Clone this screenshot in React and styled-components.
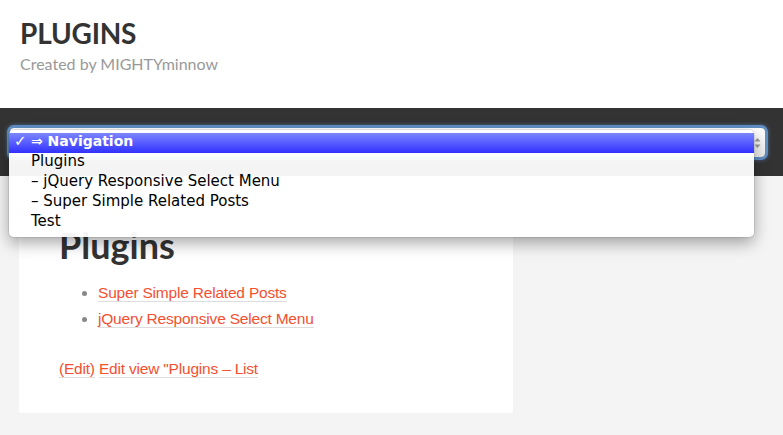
import React from "react";
import styled, { createGlobalStyle } from "styled-components";

const GlobalStyle = createGlobalStyle`
  body {
    margin: 0;
    background: #f4f4f4;
    font-family: "Liberation Sans", Arial, sans-serif;
  }
`;

const Page = styled.div`
  width: 783px;
  min-height: 435px;
  background: #f4f4f4;
`;

const Header = styled.header`
  height: 108px;
  box-sizing: border-box;
  padding: 19px 20px 0;
  background: #fff;
`;

const SiteTitle = styled.h1`
  margin: 0;
  font-family: Lato, sans-serif;
  font-weight: 700;
  font-size: 28px;
  line-height: 28px;
  color: #333;
  letter-spacing: -0.2px;
`;

const Tagline = styled.p`
  margin: 7px 0 0;
  font-family: Lato, sans-serif;
  font-size: 16px;
  line-height: 20px;
  color: #999;
`;

const Nav = styled.nav`
  position: relative;
  background: #333;
  padding: 20px 18px 19px 10px;
`;

const SelectBox = styled.div`
  height: 29px;
  box-sizing: border-box;
  border-radius: 4px;
  background: linear-gradient(#fff, #ececec);
  box-shadow: 0 0 0 3px #5f8fc4, 0 0 4px 3px rgba(95, 143, 196, 0.6);
  display: flex;
  justify-content: flex-end;
  align-items: center;
  padding-right: 4px;
`;

const Menu = styled.ul`
  position: absolute;
  top: 22px;
  left: 9px;
  width: 745px;
  margin: 0;
  padding: 3px 0 4px;
  list-style: none;
  border-radius: 5px;
  background: rgba(255, 255, 255, 0.95);
  box-shadow: 0 6px 16px rgba(0, 0, 0, 0.35), 0 0 0 1px rgba(0, 0, 0, 0.08);
  font-family: "DejaVu Sans", sans-serif;
  font-size: 15px;
  color: #000;
  z-index: 2;
`;

const Option = styled.li`
  position: relative;
  height: 20px;
  box-sizing: border-box;
  line-height: 17px;
  padding: 0 0 3px 22px;
  white-space: nowrap;
  ${(p) =>
    p.$selected &&
    `
    color: #fff;
    font-weight: 700;
    font-size: 14px;
    background: linear-gradient(#7c86ff, #3131ff);
  `}
`;

const Check = styled.span`
  position: absolute;
  left: 5px;
  top: 0;
  font-size: 15px;
`;

const Main = styled.main`
  padding: 20px 19px 23px;
`;

const Card = styled.article`
  width: 494px;
  box-sizing: border-box;
  padding: 28px 40px 31px;
  background: #fff;
  border-radius: 3px;
`;

const PageTitle = styled.h2`
  margin: 0;
  font-family: Lato, sans-serif;
  font-weight: 700;
  font-size: 36px;
  line-height: 43px;
  color: #333;
`;

const List = styled.ul`
  margin: 13px 0 24px;
  padding-left: 39px;
  font-size: 15.5px;
  line-height: 26px;
  letter-spacing: -0.2px;
  color: #888;
`;

const Link = styled.a`
  color: #f4502f;
  text-decoration: none;
  border-bottom: 1px solid #ddd;
`;

const EditLine = styled.p`
  margin: 0;
  font-size: 15.5px;
  line-height: 26px;
  letter-spacing: -0.2px;
`;

const options = [
  "Plugins",
  "– jQuery Responsive Select Menu",
  "– Super Simple Related Posts",
  "Test",
];

export default function App() {
  return (
    <Page>
      <GlobalStyle />
      <Header>
        <SiteTitle>PLUGINS</SiteTitle>
        <Tagline>Created by MIGHTYminnow</Tagline>
      </Header>
      <Nav>
        <SelectBox>
          <svg width="7" height="12" viewBox="0 0 7 12">
            <path d="M0.5 4.5 L3.5 1 L6.5 4.5 Z M0.5 7.5 L3.5 11 L6.5 7.5 Z" fill="#999" />
          </svg>
        </SelectBox>
        <Menu>
          <Option $selected>
            <Check>✓</Check>⇒ Navigation
          </Option>
          {options.map((o) => (
            <Option key={o}>{o}</Option>
          ))}
        </Menu>
      </Nav>
      <Main>
        <Card>
          <PageTitle>Plugins</PageTitle>
          <List>
            <li>
              <Link href="#">Super Simple Related Posts</Link>
            </li>
            <li>
              <Link href="#">jQuery Responsive Select Menu</Link>
            </li>
          </List>
          <EditLine>
            <Link href="#">(Edit)</Link> <Link href="#">Edit view "Plugins – List</Link>
          </EditLine>
        </Card>
      </Main>
    </Page>
  );
}
